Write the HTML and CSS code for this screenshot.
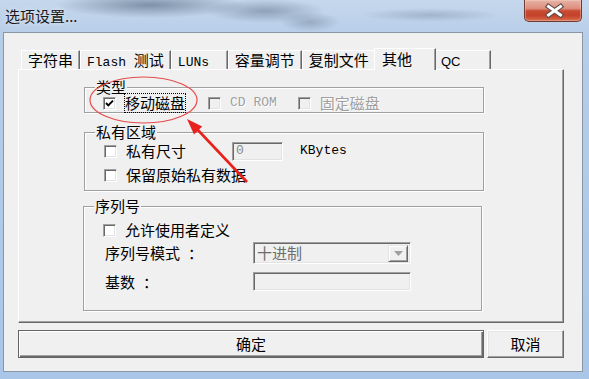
FILE: index.html
```html
<!DOCTYPE html>
<html lang="zh-CN">
<head>
<meta charset="utf-8">
<title>选项设置...</title>
<link rel="stylesheet" href="styles.css">
</head>
<body>
<div class="window">
  <div class="titlebar">
    <div class="title">选项设置...</div>
    <div class="close">
      <svg width="58" height="22" viewBox="0 0 58 22">
        <path d="M24.5 7.5 L36.5 16 M36.5 7.5 L24.5 16" stroke="#5b4a4a" stroke-width="5.2" stroke-linecap="square" fill="none"/>
        <path d="M24.5 7.5 L36.5 16 M36.5 7.5 L24.5 16" stroke="#ffffff" stroke-width="3" stroke-linecap="square" fill="none"/>
      </svg>
    </div>
  </div>

  <div class="client">
    <div class="tabs">
      <div class="tab">字符串</div>
      <div class="tab"><span class="mono">Flash </span>测试</div>
      <div class="tab"><span class="mono">LUNs</span></div>
      <div class="tab">容量调节</div>
      <div class="tab">复制文件</div>
      <div class="tab tab-active">其他</div>
      <div class="tab"><span class="sans">QC</span></div>
    </div>

    <div class="panel">
      <div class="group group-type">
        <div class="group-title">类型</div>
        <div class="row row-type">
          <span class="check">
            <svg width="11" height="11" viewBox="0 0 11 11"><path d="M2 5 L4.3 7.4 L9 2.6" stroke="#000" stroke-width="1.9" fill="none"/></svg>
          </span>
          <span class="label focus">移动磁盘</span>
          <span class="check check-disabled check-cd"></span>
          <span class="label disabled mono">CD ROM</span>
          <span class="check check-disabled check-fixed"></span>
          <span class="label disabled">固定磁盘</span>
        </div>
      </div>

      <div class="group group-private">
        <div class="group-title">私有区域</div>
        <div class="row row-size">
          <span class="check"></span>
          <span class="label">私有尺寸</span>
          <span class="edit edit-size"><span class="mono">0</span></span>
          <span class="label mono kbytes">KBytes</span>
        </div>
        <div class="row row-keep">
          <span class="check"></span>
          <span class="label">保留原始私有数据</span>
        </div>
      </div>

      <div class="group group-serial">
        <div class="group-title">序列号</div>
        <div class="row row-allow">
          <span class="check"></span>
          <span class="label">允许使用者定义</span>
        </div>
        <div class="field-grid">
          <span class="field-label">序列号模式<span class="colon">：</span></span>
          <span class="combo">
            <span class="combo-text">十进制</span>
            <span class="combo-btn">
              <svg width="9" height="5" viewBox="0 0 9 5"><path d="M0 0 H9 L4.5 5 Z" fill="#a0a0a0"/></svg>
            </span>
          </span>
          <span class="field-label">基数<span class="colon">：</span></span>
          <span class="edit edit-base"></span>
        </div>
      </div>
    </div>

    <div class="buttons">
      <div class="btn btn-default">确定</div>
      <div class="btn btn-cancel">取消</div>
    </div>
  </div>

  <svg class="annotation" width="589" height="379" viewBox="0 0 589 379">
    <ellipse cx="143.5" cy="100" rx="53.5" ry="23" fill="none" stroke="#e84a4a" stroke-width="1.2"/>
    <line x1="247" y1="182" x2="196" y2="128" stroke="#e8211d" stroke-width="2.6"/>
    <polygon points="187,119 202.2,126.6 194,134.4" fill="#e8211d"/>
  </svg>
</div>
</body>
</html>
```

FILE: styles.css
```css
* {
  box-sizing: border-box;
}

html,
body {
  margin: 0;
  padding: 0;
}

body {
  width: 589px;
  height: 379px;
  overflow: hidden;
  font-family: "Noto Sans CJK SC", "Noto Sans", sans-serif;
  font-size: 15px;
  color: #000;
  background: linear-gradient(180deg, #c5d7ec 0, #b6cde8 40px, #a9c6e8 100%);
}

.window {
  position: relative;
  width: 589px;
  height: 379px;
}

.mono {
  font-family: "Liberation Mono", monospace;
  font-size: 13px;
}

.sans {
  font-family: "Liberation Sans", sans-serif;
  font-size: 13px;
}

/* ---------- title bar ---------- */
.titlebar {
  height: 32px;
  display: flex;
  justify-content: space-between;
  align-items: flex-start;
  background:
    radial-gradient(ellipse 95px 13px at 150px 5px, rgba(70, 88, 112, 0.55), rgba(70, 88, 112, 0) 100%),
    radial-gradient(ellipse 60px 12px at 265px 11px, rgba(80, 98, 122, 0.45), rgba(80, 98, 122, 0) 100%),
    radial-gradient(ellipse 70px 7px at 430px 15px, rgba(90, 108, 132, 0.3), rgba(90, 108, 132, 0) 100%),
    radial-gradient(ellipse 30px 10px at 310px 22px, rgba(80, 98, 122, 0.35), rgba(80, 98, 122, 0) 100%);
}

.title {
  padding: 6px 0 0 5px;
  line-height: 19px;
  font-size: 15px;
  color: #1a1a1a;
  text-shadow: 0 0 5px rgba(255, 255, 255, 0.7);
}

.close {
  width: 58px;
  height: 22px;
  margin-right: 7px;
  border: 1px solid #6e3a34;
  border-top: none;
  border-radius: 0 0 5px 5px;
  background: linear-gradient(180deg, #e7b3a8 0, #dd8e7c 40%, #c84a32 52%, #c5432b 75%, #d8704f 100%);
  box-shadow: inset 0 0 0 1px rgba(255, 220, 210, 0.35);
}

.close svg {
  display: block;
  margin: -1px 0 0 -1px;
}

/* ---------- client ---------- */
.client {
  margin-left: 3px;
  width: 580px;
  height: 340px;
  border: 1px solid #8896a6;
  background: #f0f0f0;
  padding: 15px 18px 0 14px;
}

/* ---------- tabs ---------- */
.tabs {
  display: flex;
  align-items: flex-end;
  height: 21px;
  padding-left: 3px;
}

.tab {
  height: 19px;
  min-width: 57px;
  padding: 0 6px;
  border-top: 1px solid #fff;
  border-left: 1px solid #fff;
  border-right: 1px solid #696969;
  box-shadow: inset -1px 0 0 #a0a0a0;
  background: #f0f0f0;
  line-height: 17px;
  white-space: nowrap;
}

.tab-active {
  position: relative;
  z-index: 1;
  height: 22px;
  min-width: 62px;
  margin: 0 -2px -1px;
  padding-left: 7px;
  line-height: 19px;
}

/* ---------- panel ---------- */
.panel {
  height: 254px;
  border-top: 1px solid #fff;
  border-left: 1px solid #fff;
  border-right: 1px solid #696969;
  border-bottom: 1px solid #696969;
  box-shadow: inset -1px -1px 0 #a0a0a0;
  padding: 17px 0 0 65px;
}

.group {
  width: 400px;
  border: 1px solid #a0a0a0;
  box-shadow: 1px 1px 0 #fff, inset 1px 1px 0 #fff;
}

.group-title {
  width: fit-content;
  height: 16px;
  margin: -9px 0 0 10px;
  padding: 0 1px;
  background: #f0f0f0;
  line-height: 16px;
}

.group-type {
  height: 26px;
}

.group-private {
  height: 59px;
  margin-top: 19px;
}

.group-serial {
  width: 399px;
  height: 105px;
  margin: 15px 0 0 -1px;
}

.row {
  display: flex;
  align-items: center;
  height: 20px;
  padding-left: 19px;
  line-height: 18px;
}

.row-type {
  height: 16px;
  padding-left: 18px;
}

.row-size {
  margin-top: 1px;
}

.row-keep {
  margin-top: 4px;
}

.row-allow {
  margin-top: 6px;
}

.check {
  flex: none;
  width: 13px;
  height: 13px;
  background: #fff;
  border: 1px solid;
  border-color: #a0a0a0 #fff #fff #a0a0a0;
  box-shadow: inset 1px 1px 0 #696969, inset -1px -1px 0 #e3e3e3;
  margin-right: 9px;
}

.check svg {
  display: block;
}

.check-disabled {
  background: #f0f0f0;
}

.check-cd {
  margin-left: 23px;
}

.check-fixed {
  margin-left: 21px;
}

.label {
  white-space: nowrap;
}

.focus {
  outline: 1px dotted #000;
  outline-offset: 0;
}

.disabled {
  color: #a0a0a0;
  text-shadow: 1px 1px 0 #fff;
}

.edit {
  display: flex;
  align-items: center;
  background: #f0f0f0;
  border: 1px solid;
  border-color: #a0a0a0 #fff #fff #a0a0a0;
  box-shadow: inset 1px 1px 0 #696969, inset -1px -1px 0 #e3e3e3;
  padding-left: 3px;
  color: #8a8a8a;
}

.edit-size {
  width: 51px;
  height: 19px;
  margin-left: 46px;
}

.kbytes {
  margin-left: 17px;
}

.field-grid {
  display: grid;
  grid-template-columns: 148px 158px;
  grid-template-rows: 22px 19px;
  row-gap: 8px;
  align-items: center;
  margin-top: 2px;
  padding-left: 21px;
}

.field-label {
  white-space: nowrap;
  line-height: 18px;
}

.colon {
  margin-left: 8px;
}

.combo {
  display: flex;
  align-items: center;
  justify-content: space-between;
  height: 22px;
  background: #f0f0f0;
  border: 1px solid;
  border-color: #a0a0a0 #fff #fff #a0a0a0;
  box-shadow: inset 1px 1px 0 #696969, inset -1px -1px 0 #e3e3e3;
  padding: 2px 2px 2px 3px;
}

.combo-text {
  color: #6d6d6d;
  line-height: 18px;
}

.combo-btn {
  display: flex;
  align-items: center;
  justify-content: center;
  width: 20px;
  height: 17px;
  background: #f0f0f0;
  border: 1px solid;
  border-color: #e3e3e3 #696969 #696969 #e3e3e3;
  box-shadow: inset 1px 1px 0 #fff, inset -1px -1px 0 #a0a0a0;
}

.combo-btn svg {
  display: block;
}

.edit-base {
  height: 19px;
}

/* ---------- buttons ---------- */
.buttons {
  display: flex;
  gap: 3px;
  margin-top: 7px;
}

.btn {
  height: 28px;
  display: flex;
  align-items: center;
  justify-content: center;
  line-height: 18px;
  background: #f0f0f0;
}

.btn-default {
  width: 466px;
  border: 1px solid #646464;
  box-shadow: inset 1px 1px 0 #fff, inset -1px -1px 0 #696969, inset -2px -2px 0 #a0a0a0;
}

.btn-cancel {
  width: 77px;
  border-top: 1px solid #fff;
  border-left: 1px solid #fff;
  border-right: 1px solid #696969;
  border-bottom: 1px solid #696969;
  box-shadow: inset -1px -1px 0 #a0a0a0, inset 1px 1px 0 #e3e3e3;
}

/* ---------- annotation overlay ---------- */
.annotation {
  position: absolute;
  top: 0;
  left: 0;
  pointer-events: none;
}
```
